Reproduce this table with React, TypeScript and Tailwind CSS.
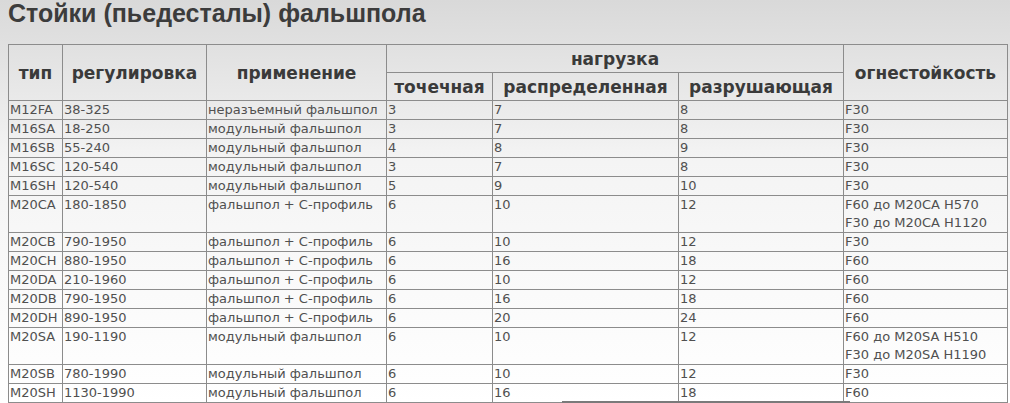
import React from 'react';

type Row = {
  type: string;
  adj: string;
  use: string;
  point: string;
  dist: string;
  destr: string;
  fire: string[];
};

const rows: Row[] = [
  { type: 'M12FA', adj: '38-325', use: 'неразъемный фальшпол', point: '3', dist: '7', destr: '8', fire: ['F30'] },
  { type: 'M16SA', adj: '18-250', use: 'модульный фальшпол', point: '3', dist: '7', destr: '8', fire: ['F30'] },
  { type: 'M16SB', adj: '55-240', use: 'модульный фальшпол', point: '4', dist: '8', destr: '9', fire: ['F30'] },
  { type: 'M16SC', adj: '120-540', use: 'модульный фальшпол', point: '3', dist: '7', destr: '8', fire: ['F30'] },
  { type: 'M16SH', adj: '120-540', use: 'модульный фальшпол', point: '5', dist: '9', destr: '10', fire: ['F30'] },
  {
    type: 'M20CA',
    adj: '180-1850',
    use: 'фальшпол + С-профиль',
    point: '6',
    dist: '10',
    destr: '12',
    fire: ['F60 до M20CA H570', 'F30 до M20CA H1120'],
  },
  { type: 'M20CB', adj: '790-1950', use: 'фальшпол + С-профиль', point: '6', dist: '10', destr: '12', fire: ['F30'] },
  { type: 'M20CH', adj: '880-1950', use: 'фальшпол + С-профиль', point: '6', dist: '16', destr: '18', fire: ['F60'] },
  { type: 'M20DA', adj: '210-1960', use: 'фальшпол + С-профиль', point: '6', dist: '10', destr: '12', fire: ['F60'] },
  { type: 'M20DB', adj: '790-1950', use: 'фальшпол + С-профиль', point: '6', dist: '16', destr: '18', fire: ['F60'] },
  { type: 'M20DH', adj: '890-1950', use: 'фальшпол + С-профиль', point: '6', dist: '20', destr: '24', fire: ['F60'] },
  {
    type: 'M20SA',
    adj: '190-1190',
    use: 'модульный фальшпол',
    point: '6',
    dist: '10',
    destr: '12',
    fire: ['F60 до M20SA H510', 'F30 до M20SA H1190'],
  },
  { type: 'M20SB', adj: '780-1990', use: 'модульный фальшпол', point: '6', dist: '10', destr: '12', fire: ['F30'] },
  { type: 'M20SH', adj: '1130-1990', use: 'модульный фальшпол', point: '6', dist: '16', destr: '18', fire: ['F60'] },
];

const th = 'border border-[#8c8c8c] px-0 font-bold text-[#3a3a3a] text-[17px] leading-[20px] whitespace-nowrap';
const td = 'border border-[#8c8c8c] pl-px align-top text-[13px] leading-[18px] text-[#505050] whitespace-nowrap';

const App: React.FC = () => {
  return (
    <div className="relative w-[1010px] h-[403px] overflow-hidden bg-gradient-to-b from-[#d9d9d9] via-[#f4f4f4] via-40% to-white">
      {/* Title */}
      <h1 className="pl-2 text-[25px] leading-[27px] font-bold text-[#3c3c3c] [font-family:'Liberation_Sans',Arial,sans-serif]">
        Стойки (пьедесталы) фальшпола
      </h1>

      <table className="mt-[17px] ml-2 w-[999px] table-fixed border-collapse [font-family:'DejaVu_Sans',Tahoma,sans-serif]">
        <colgroup>
          <col className="w-[54px]" />
          <col className="w-[144px]" />
          <col className="w-[180px]" />
          <col className="w-[106px]" />
          <col className="w-[186px]" />
          <col className="w-[165px]" />
          <col className="w-[164px]" />
        </colgroup>
        <thead>
          <tr className="h-[28px]">
            <th rowSpan={2} className={th}>тип</th>
            <th rowSpan={2} className={th}>регулировка</th>
            <th rowSpan={2} className={th}>применение</th>
            <th colSpan={3} className={th}>нагрузка</th>
            <th rowSpan={2} className={th}>огнестойкость</th>
          </tr>
          <tr className="h-[28px]">
            <th className={th}>точечная</th>
            <th className={th}>распределенная</th>
            <th className={th}>разрушающая</th>
          </tr>
        </thead>
        <tbody>
          {rows.map((r) => (
            <tr key={r.type}>
              <td className={td}>{r.type}</td>
              <td className={td}>{r.adj}</td>
              <td className={td}>{r.use}</td>
              <td className={td}>{r.point}</td>
              <td className={td}>{r.dist}</td>
              <td className={td}>{r.destr}</td>
              <td className={td}>
                {r.fire.map((f) => (
                  <div key={f}>{f}</div>
                ))}
              </td>
            </tr>
          ))}
        </tbody>
      </table>

      {/* scrollbar shadow at the bottom */}
      <div className="absolute left-[562px] bottom-0 h-[2px] w-[288px] bg-[#7a7a7a]" />
    </div>
  );
};

export default App;
